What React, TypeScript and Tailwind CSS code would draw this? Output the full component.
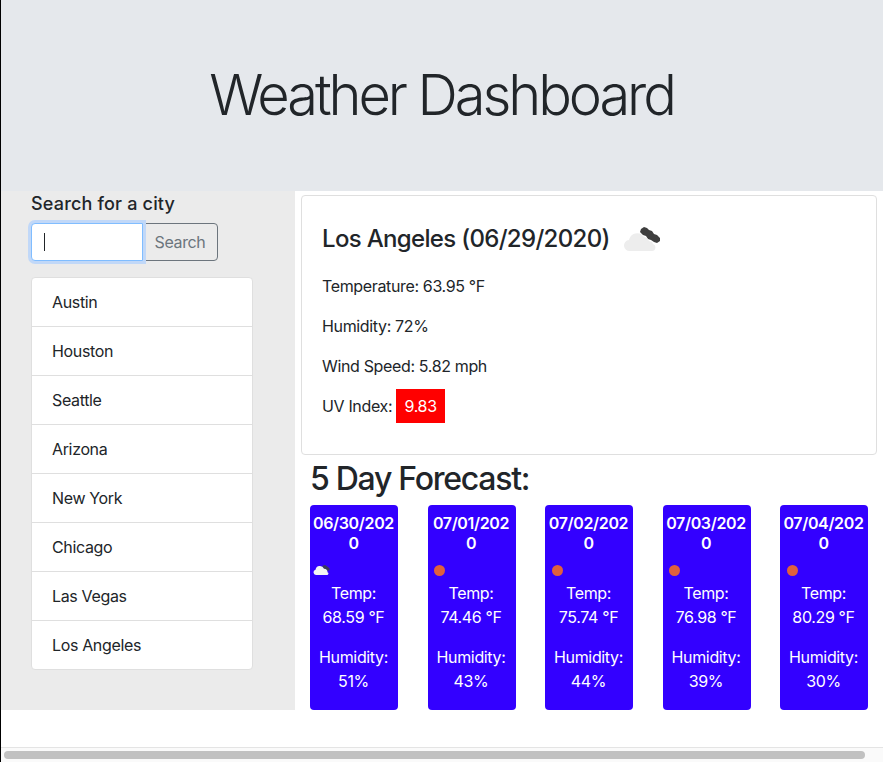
const font = { fontFamily: "Inter, 'Liberation Sans', sans-serif" };

const cities = ["Austin", "Houston", "Seattle", "Arizona", "New York", "Chicago", "Las Vegas", "Los Angeles"];

const days = [
  { date: "06/30/2020", temp: "68.59 °F", hum: "51%", icon: "cloud" },
  { date: "07/01/2020", temp: "74.46 °F", hum: "43%", icon: "sun" },
  { date: "07/02/2020", temp: "75.74 °F", hum: "44%", icon: "sun" },
  { date: "07/03/2020", temp: "76.98 °F", hum: "39%", icon: "sun" },
  { date: "07/04/2020", temp: "80.29 °F", hum: "30%", icon: "sun" },
];

function BrokenClouds() {
  return (
    <svg width="40" height="40" viewBox="0 0 40 40">
      <path d="M17 4l3-2 3 1 2 2 3 1 2 3 3 1 3 3 0 3-3 2-3-1-3-2-3-1-2-3-3-1-3-3z" fill="#3f3f3f" />
      <path d="M6 26a5.500 5.500 0 0 1-1-11 8.500 8.500 0 0 1 12-6l3 3 3 1 2 3 3 1 1 2a3.600 3.600 0 0 1-1 7z" fill="#ededed" />
    </svg>
  );
}

function SmallClouds() {
  return (
    <svg width="20" height="20" viewBox="0 0 20 20">
      <path d="M10 6l3-1 3 2 2 2-2 2-4-2z" fill="#3a3a5a" />
      <path d="M4 15a2.700 2.700 0 0 1-.5-5.300 4.500 4.500 0 0 1 8.500-1 3.500 3.500 0 0 1 3.500 3.500 1.500 1.500 0 0 1 0 2.800z" fill="#f4f4f4" />
    </svg>
  );
}

export default function App() {
  return (
    <div className="w-[883px] h-[762px] flex flex-col overflow-hidden bg-white border-l border-black text-[#212529] tracking-[-0.022em]" style={font}>
      <header className="h-[191px] shrink-0 bg-[#e5e8ec] flex items-center justify-center">
        <h1 className="text-[56px] font-light leading-[1.2] mt-[1px] mr-[1px] tracking-[-0.055em]">Weather Dashboard</h1>
      </header>

      <main className="h-[519px] shrink-0 flex">
        <aside className="w-[294px] shrink-0 bg-[#ebebeb] pl-[30px]">
          <h2 className="text-[18px] font-medium leading-[24px] mt-[1px] tracking-[0.01em]">Search for a city</h2>
          <div className="flex mt-[7px] h-[38px] w-[187px]">
            <div className="w-[112px] h-[38px] bg-white border border-[#80bdff] rounded-l-[4px] ring-[3px] ring-[#c1d8f8] flex items-center pl-[12px] z-10">
              <div className="w-px h-[18px] bg-[#212529]" />
            </div>
            <button className="flex-1 h-[38px] border border-[#6c757d] rounded-r-[4px] text-[16px] text-[#6c757d] -ml-px">Search</button>
          </div>
          <ul className="mt-[16px] w-[222px] bg-white border border-[#dfdfdf] rounded-[4px]">
            {cities.map((c, i) => (
              <li key={c} className={`flex items-center pl-[20px] text-[16px] ${i > 0 ? "h-[49px] border-t border-[#dfdfdf]" : "h-[48px]"}`}>
                {c}
              </li>
            ))}
          </ul>
        </aside>

        <section className="flex-1 pl-[6px] pr-[6px] pt-[4px]">
          <div className="h-[260px] border border-[#dfdfdf] rounded-[4px] pl-[20px] pt-[20px]">
            <div className="flex items-center h-[46px]">
              <h3 className="text-[24px] font-medium leading-[46px] tracking-[-0.028em]">Los Angeles (06/29/2020)</h3>
              <span className="ml-[14px] mt-[11px] flex"><BrokenClouds /></span>
            </div>
            <p className="text-[16px] leading-[24px] mt-[12px]">Temperature: 63.95 °F</p>
            <p className="text-[16px] leading-[24px] mt-[16px]">Humidity: 72%</p>
            <p className="text-[16px] leading-[24px] mt-[16px]">Wind Speed: 5.82 mph</p>
            <div className="flex items-center mt-[11px] h-[34px] text-[16px]">
              <span>UV Index:</span>
              <span className="ml-[4px] w-[49px] h-[34px] bg-[#ff0000] text-white flex items-center justify-center">9.83</span>
            </div>
          </div>

          <h2 className="text-[32px] font-medium leading-[38px] mt-[5px] ml-[9px] tracking-[-0.04em]">5 Day Forecast:</h2>

          <div className="flex gap-[29.500px] ml-[9px] mt-[7px]">
            {days.map((d) => (
              <article key={d.date} className="w-[88px] h-[205px] bg-[#3300ff] rounded-[4px] text-white text-center text-[16px] pl-[2px] pr-[3px] pt-[8px]">
                <div className="font-semibold leading-[20px] break-all">{d.date}</div>
                <div className="h-[20px] mt-[7px] flex items-center justify-start">
                  {d.icon === "cloud" ? (
                    <SmallClouds />
                  ) : (
                    <span className="block w-[11px] h-[11px] ml-[4.500px] rounded-full bg-[#e0603d]" />
                  )}
                </div>
                <p className="leading-[24px] mt-[1px]">Temp:</p>
                <p className="leading-[24px]">{d.temp}</p>
                <p className="leading-[24px] mt-[16px]">Humidity:</p>
                <p className="leading-[24px]">{d.hum}</p>
              </article>
            ))}
          </div>
        </section>
      </main>

      <div className="flex-1" />
      <div className="h-[15px] shrink-0 bg-[#fafafa] border-t border-[#e4e4e4] flex items-center pl-[3px] pr-[18px]">
        <div className="w-full h-[8px] rounded-full bg-[#c1c1c1]" />
      </div>
    </div>
  );
}
